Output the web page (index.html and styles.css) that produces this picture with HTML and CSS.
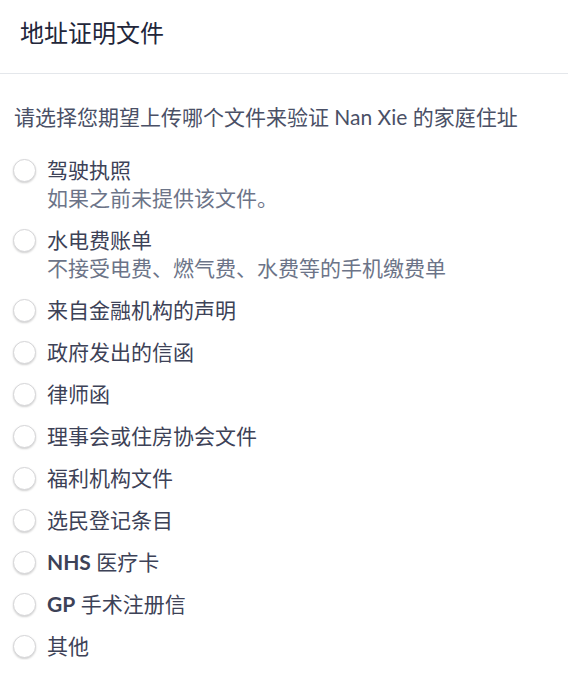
FILE: index.html
```html
<!DOCTYPE html>
<html lang="zh">
<head>
<meta charset="utf-8">
<link rel="stylesheet" href="styles.css">
</head>
<body>
<header class="header">
  <h1 class="title">地址证明文件</h1>
</header>
<main class="content">
  <p class="desc">请选择您期望上传哪个文件来验证 Nan Xie 的家庭住址</p>
  <ul class="options">
    <li class="option"><span class="radio"></span><div class="text"><div class="label">驾驶执照</div><div class="sub">如果之前未提供该文件。</div></div></li>
    <li class="option"><span class="radio"></span><div class="text"><div class="label">水电费账单</div><div class="sub">不接受电费、燃气费、水费等的手机缴费单</div></div></li>
    <li class="option"><span class="radio"></span><div class="text"><div class="label">来自金融机构的声明</div></div></li>
    <li class="option"><span class="radio"></span><div class="text"><div class="label">政府发出的信函</div></div></li>
    <li class="option"><span class="radio"></span><div class="text"><div class="label">律师函</div></div></li>
    <li class="option"><span class="radio"></span><div class="text"><div class="label">理事会或住房协会文件</div></div></li>
    <li class="option"><span class="radio"></span><div class="text"><div class="label">福利机构文件</div></div></li>
    <li class="option"><span class="radio"></span><div class="text"><div class="label">选民登记条目</div></div></li>
    <li class="option"><span class="radio"></span><div class="text"><div class="label"><b class="latin">NHS</b> 医疗卡</div></div></li>
    <li class="option"><span class="radio"></span><div class="text"><div class="label"><b class="latin">GP</b> 手术注册信</div></div></li>
    <li class="option"><span class="radio"></span><div class="text"><div class="label">其他</div></div></li>
  </ul>
</main>
</body>
</html>
```

FILE: styles.css
```css
* { box-sizing: border-box; }
html, body { margin: 0; padding: 0; background: #fff; }
body {
  font-family: "Lato", "Noto Sans CJK SC", sans-serif;
  color: #3d4257;
}
.header {
  height: 74px;
  padding: 19px 20px 0;
  border-bottom: 1px solid #e4e7eb;
}
.title {
  margin: 0;
  font-size: 24px;
  line-height: 28px;
  font-weight: 400;
  color: #22263a;
}
.content { padding: 0 13px; }
.desc {
  margin: 29px 0 0 1px;
  font-size: 21px;
  line-height: 28px;
  color: #4a5066;
}
.options {
  list-style: none;
  margin: 25px 0 0;
  padding: 0;
  display: flex;
  flex-direction: column;
  gap: 14px;
}
.option {
  display: flex;
  align-items: flex-start;
  gap: 11px;
}
.radio {
  flex: none;
  width: 23px;
  height: 23px;
  margin-top: 3px;
  border-radius: 50%;
  border: 1px solid #d6d6d8;
  box-shadow: 0 1px 2px rgba(0,0,0,0.18);
  background: #fff;
}
.label, .sub {
  font-size: 21px;
  line-height: 28px;
}
.label { color: #3d4257; }
.sub { color: #6c7488; }
.latin { font-weight: 700; }
```
